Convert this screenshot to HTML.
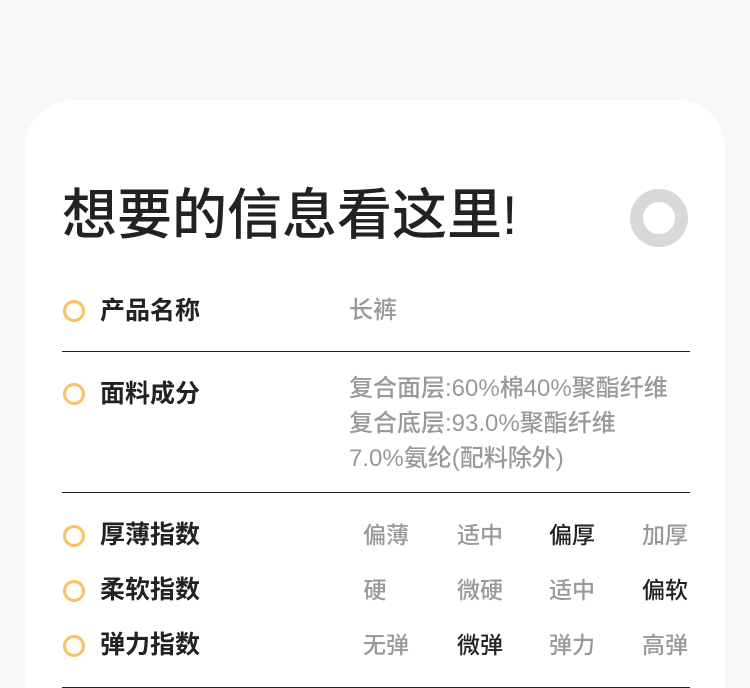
<!DOCTYPE html>
<html><head><meta charset="utf-8"><style>
*{margin:0;padding:0;box-sizing:border-box}
html,body{width:750px;height:688px;overflow:hidden}
body{background:#f8f8f8;font-family:"Liberation Sans","Noto Sans CJK SC",sans-serif;position:relative}
.card{position:absolute;left:25px;top:100px;width:700px;height:588px;background:#fff;border-radius:48px 48px 0 0}
.t{position:absolute;left:62px;top:180px;font-size:55px;line-height:70px;color:#222;font-weight:500}
.ring{position:absolute;left:630px;top:189px;width:58px;height:58px;border-radius:50%;border:13px solid #d8d8d8}
.b{position:absolute;left:63px;width:22px;height:22px;border-radius:50%;border:3px solid #fbc25a}
.l{position:absolute;left:100px;font-size:25px;font-weight:700;color:#222;line-height:30px}
.v{position:absolute;left:349px;font-size:24px;color:#999;line-height:35px;font-weight:500;white-space:nowrap}
.hr{position:absolute;left:62px;width:628px;height:1px;background:#222}
.o{position:absolute;font-size:23px;color:#999;line-height:30px;width:60px;text-align:center;font-weight:500}
.s{color:#222}
</style></head><body>
<div class="card"></div>
<div class="t">想要的信息看这里!</div>
<div class="ring"></div>

<div class="b" style="top:300px"></div><div class="l" style="top:296px">产品名称</div>
<div class="v" style="top:293px">长裤</div>
<div class="hr" style="top:351px"></div>

<div class="b" style="top:383px"></div><div class="l" style="top:379px">面料成分</div>
<div class="v" style="top:371px">复合面层:60%棉40%聚酯纤维<br>复合底层:93.0%聚酯纤维<br>7.0%氨纶(配料除外)</div>
<div class="hr" style="top:492px"></div>

<div class="b" style="top:525px"></div><div class="l" style="top:520px">厚薄指数</div>
<div class="o" style="left:356px;top:520px">偏薄</div><div class="o" style="left:450px;top:520px">适中</div><div class="o s" style="left:542px;top:520px">偏厚</div><div class="o" style="left:635px;top:520px">加厚</div>

<div class="b" style="top:580px"></div><div class="l" style="top:575px">柔软指数</div>
<div class="o" style="left:345px;top:575px">硬</div><div class="o" style="left:450px;top:575px">微硬</div><div class="o" style="left:542px;top:575px">适中</div><div class="o s" style="left:635px;top:575px">偏软</div>

<div class="b" style="top:635px"></div><div class="l" style="top:630px">弹力指数</div>
<div class="o" style="left:356px;top:630px">无弹</div><div class="o s" style="left:450px;top:630px">微弹</div><div class="o" style="left:542px;top:630px">弹力</div><div class="o" style="left:635px;top:630px">高弹</div>
<div class="hr" style="top:687px"></div>
</body></html>
